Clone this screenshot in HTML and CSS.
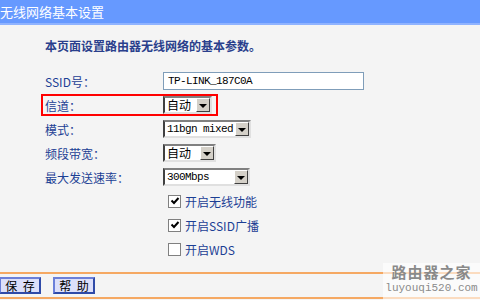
FILE: index.html
```html
<!DOCTYPE html>
<html lang="zh-CN">
<head>
    <meta charset="UTF-8">
    <title>无线网络基本设置</title>
    <link rel="stylesheet" href="styles.css">
</head>
<body>
    <div class="header">无线网络基本设置</div>
    <div class="intro">本页面设置路由器无线网络的基本参数。</div>

    <div class="form">
        <div class="row">
            <span class="label">SSID号：</span>
            <div class="text-input">TP-LINK_187C0A</div>
        </div>
        <div class="row marked">
            <span class="label">信道：</span>
            <div class="select w-channel"><span class="val cjk">自动</span><span class="arrow"></span></div>
        </div>
        <div class="row">
            <span class="label">模式：</span>
            <div class="select w-mode"><span class="val">11bgn mixed</span><span class="arrow"></span></div>
        </div>
        <div class="row">
            <span class="label">频段带宽：</span>
            <div class="select w-band"><span class="val cjk">自动</span><span class="arrow"></span></div>
        </div>
        <div class="row">
            <span class="label">最大发送速率：</span>
            <div class="select w-rate"><span class="val">300Mbps</span><span class="arrow"></span></div>
        </div>
        <div class="row check-row">
            <span class="box"><svg width="10" height="10" viewBox="0 0 10 10"><path d="M1.5 4.5 L4 7 L8.5 2" fill="none" stroke="#000" stroke-width="2"/></svg></span>
            <span class="check-label">开启无线功能</span>
        </div>
        <div class="row check-row">
            <span class="box"><svg width="10" height="10" viewBox="0 0 10 10"><path d="M1.5 4.5 L4 7 L8.5 2" fill="none" stroke="#000" stroke-width="2"/></svg></span>
            <span class="check-label">开启SSID广播</span>
        </div>
        <div class="row check-row">
            <span class="box"></span>
            <span class="check-label">开启WDS</span>
        </div>
    </div>

    <div class="buttons">
        <div class="btn">保&nbsp;&nbsp;存</div>
        <div class="btn">帮&nbsp;&nbsp;助</div>
    </div>

    <div class="watermark">
        <div class="wm-title">路由器之家</div>
        <div class="wm-url">luyouqi520.com</div>
    </div>
</body>
</html>
```

FILE: styles.css
```css
body { margin: 0; background: #f4f4f4; font-family: "Noto Sans CJK SC", sans-serif; font-size: 12px; color: #1c3f94; position: relative; height: 300px; overflow: hidden; }
.header { height: 23px; line-height: 23px; background: #6699ff; border-bottom: 2px solid #8fb3ff; color: #fff; font-size: 13px; }
.intro { margin-top: 13px; padding-left: 45px; height: 16px; line-height: 16px; font-weight: bold; color: #2a3f8c; }
.form { margin-top: 15px; }
.row { display: flex; align-items: center; height: 24px; padding-left: 45px; }
.label { width: 118px; flex: none; }
.marked { width: fit-content; height: 18px; margin: 1px 0 1px 41px; padding: 0 4px 0 2px; border: 2px solid #ff0000; }
.text-input { width: 195px; height: 16px; line-height: 16px; padding-left: 4px; border: 1px solid #7f9db9; background: #fff; color: #000; font-family: "Liberation Mono", monospace; font-size: 11px; letter-spacing: -0.6px; }
.select { display: flex; height: 14px; background: #fff; border: 2px solid; border-color: #808080 #e0e0e0 #e0e0e0 #404040; color: #000; }
.select .val { flex: 1; padding-left: 2px; line-height: 14px; font-family: "Liberation Mono", monospace; font-size: 11px; letter-spacing: -0.6px; white-space: nowrap; }
.select .val.cjk { font-family: "Noto Sans CJK SC", sans-serif; font-size: 12px; letter-spacing: 0; }
.select .arrow { width: 12px; background: #d4d0c8; border: 1px solid; border-color: #fff #404040 #404040 #fff; display: flex; align-items: center; justify-content: center; }
.select .arrow::after { content: ""; border-left: 4px solid transparent; border-right: 4px solid transparent; border-top: 4px solid #000; margin-top: 1px; }
.w-channel { width: 45px; }
.w-mode { width: 84px; }
.w-band { width: 49px; }
.w-rate { width: 83px; }
.check-row { padding-left: 168px; }
.box { width: 11px; height: 11px; border: 1px solid #808080; background: #fff; display: flex; align-items: center; justify-content: center; margin-right: 4px; }
.check-label { color: #1c3f94; }
.buttons { position: absolute; left: 0; right: 0; top: 272px; height: 23px; border-top: 2px solid #f5a862; border-bottom: 2px solid #f5a862; display: flex; align-items: center; gap: 12px; }
.btn { box-sizing: border-box; height: 17px; width: 42px; display: flex; align-items: center; justify-content: center; white-space: nowrap; background: #dcdffa; border: 2px solid; border-color: #6b7fd9 #2f4aa8 #2f4aa8 #6b7fd9; font-size: 12px; color: #000; }
.buttons .btn:first-child { margin-left: -1px; }
.watermark { position: absolute; right: 0; bottom: 0; width: 97px; height: 37px; background: rgba(255,255,255,0.6); text-align: center; color: #8a8a8a; }
.wm-title { font-size: 15px; font-weight: bold; line-height: 18px; letter-spacing: 1px; }
.wm-url { font-family: "Liberation Mono", monospace; font-size: 11px; line-height: 14px; }
```
